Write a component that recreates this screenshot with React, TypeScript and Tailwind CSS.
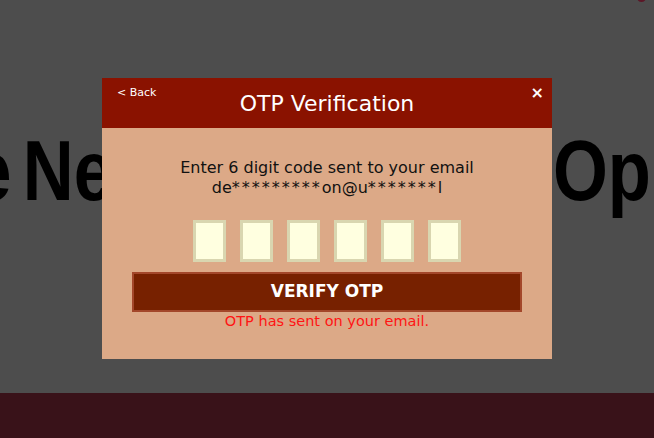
import React from "react";

export default function App() {
  const boxes = [0, 1, 2, 3, 4, 5];
  return (
    <div className="relative h-[438px] w-full overflow-hidden bg-[#4d4d4d] flex flex-col">
      <div className="absolute top-[-7px] right-[8px] h-[9px] w-[9px] rounded-full bg-[#5c1727]" />
      <div className="mt-[127px] ml-[-114px] w-max origin-left scale-x-[0.82] whitespace-nowrap text-[86px] leading-[86px] font-bold text-black [word-spacing:-16px] [font-family:'Liberation_Sans',Arial,sans-serif]">
        <span className="mr-[6px]">The</span> New Investment Opportunities
      </div>
      <div className="flex-1" />
      <div className="h-[45px] bg-[#391219]" />

      <div className="absolute inset-0 flex justify-center pt-[78px]">
        <div className="w-[450px] self-start bg-[#dca987] [font-family:'DejaVu_Sans',Verdana,sans-serif]">
          <div className="grid h-[50px] grid-cols-[1fr_auto_1fr] bg-[#8a1200] text-white">
            <div className="self-start justify-self-start pl-[15px] pt-[8px] text-[11px] leading-[13px]">&lt; Back</div>
            <div className="self-center pt-[1px] text-[22px] leading-[26px]">OTP Verification</div>
            <div className="self-start justify-self-end pr-[8px] pt-[6px] text-[16px] font-bold leading-[18px]">×</div>
          </div>
          <div className="flex flex-col items-center px-[30px] pt-[30px] pb-[29px]">
            <div className="text-center text-[16px] leading-[20px] text-[#111]">
              <div>Enter 6 digit code sent to your email</div>
              <div>
                de<span className="tracking-[2px]">*********</span>on@u<span className="tracking-[2px]">*******</span>l
              </div>
            </div>
            <div className="mt-[22px] flex gap-[14px]">
              {boxes.map((i) => (
                <input
                  key={i}
                  maxLength={1}
                  className="h-[42px] w-[33px] border-[3px] border-[#d9d6b0] bg-[#ffffe0] p-0 text-center outline-none"
                />
              ))}
            </div>
            <button className="mt-[10px] h-[40px] w-full border-2 border-[#a3472a] bg-[#772100] text-[17px] font-bold text-white">
              VERIFY OTP
            </button>
            <div className="text-[14.5px] leading-[18px] text-[#ff1414]">OTP has sent on your email.</div>
          </div>
        </div>
      </div>
    </div>
  );
}
